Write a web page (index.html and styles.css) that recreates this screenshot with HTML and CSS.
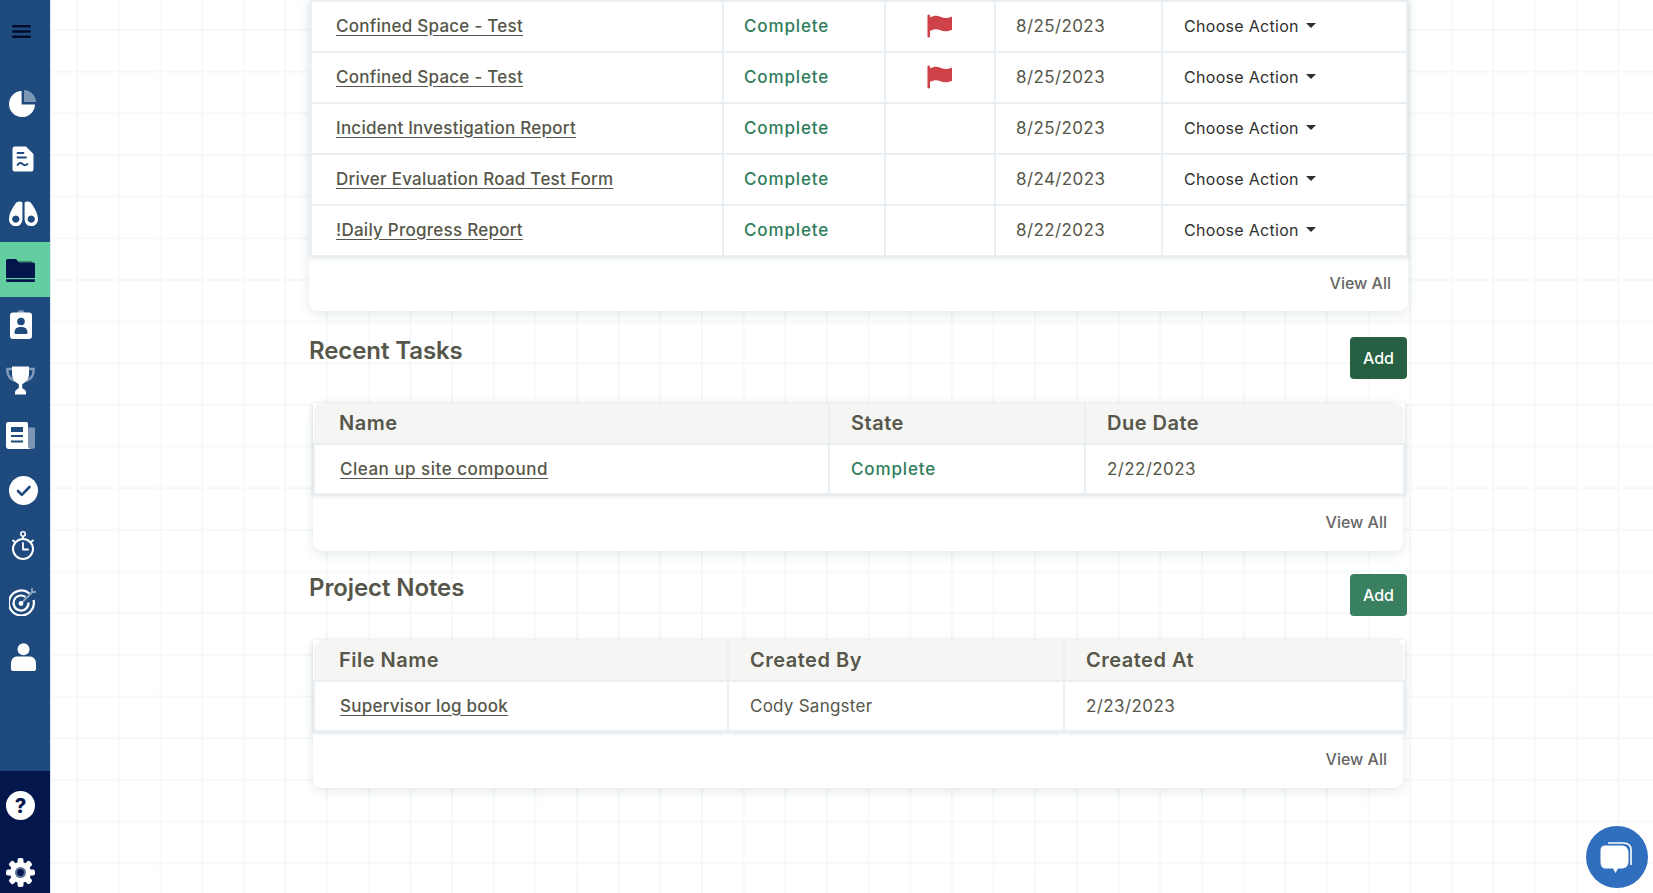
FILE: index.html
```html
<!DOCTYPE html>
<html lang="en">
<head>
<meta charset="utf-8">
<title>Project</title>
<link rel="stylesheet" href="styles.css">
</head>
<body>
<aside class="sidebar">
  <div class="side-top">
    <svg class="burger" width="19" height="13" viewBox="0 0 19 13"><rect width="19" height="2.400" rx="1.200"/><rect y="5.300" width="19" height="2.400" rx="1.200"/><rect y="10.600" width="19" height="2.400" rx="1.200"/></svg>
  </div>
  <nav class="side-nav">
    <a class="nav-item shift-r"><svg width="28" height="28" viewBox="0 0 28 28"><path fill="#fff" d="M12.600 2 A13 13 0 1 0 26 15.400 H12.600 Z"/><path fill="#fff" opacity=".42" d="M15 1 A12.600 12.600 0 0 1 27 13 H15 Z"/></svg></a>
    <a class="nav-item shift-r"><svg width="22" height="26" viewBox="0 0 22 26"><path fill="#fff" d="M3 .5 H14 L21.500 8 V23 a2.500 2.500 0 0 1 -2.500 2.500 H3 A2.500 2.500 0 0 1 .5 23 V3 A2.500 2.500 0 0 1 3 .5 Z"/><path fill="none" stroke="#1e4a7e" stroke-width="1.800" stroke-linecap="round" d="M5.500 7 H11.500 M5.500 11.500 H14 M5.500 19 C7 16.500 9 16.500 10.500 18 S13.500 19.800 15.500 18"/></svg></a>
    <a class="nav-item shift-r"><svg width="29" height="25" viewBox="0 0 29 25"><path fill="#fff" fill-rule="evenodd" d="M7 2 C8.500 .2 12 0 13.400 1.500 V18 A6.700 6.700 0 1 1 .1 17.500 C.2 12 4 6 7 2 Z M6.800 14.500 a3.600 3.600 0 1 0 .01 0 Z"/><path fill="#fff" fill-rule="evenodd" d="M22 2 C20.500 .2 17 0 15.600 1.500 V18 A6.700 6.700 0 1 0 28.900 17.500 C28.800 12 25 6 22 2 Z M22.200 14.500 a3.600 3.600 0 1 1 -.01 0 Z"/></svg></a>
    <a class="nav-item active"><svg width="29" height="23" viewBox="0 0 29 23"><path fill="#3f8a72" d="M10 2 H26 V8 H10 Z"/><path fill="#04174c" d="M1.500 0 H10 L13 3.500 H27.500 A1.500 1.500 0 0 1 29 5 V19 H0 V1.500 A1.500 1.500 0 0 1 1.500 0 Z"/><path fill="#04174c" d="M0 20.300 H29 V21.500 A1.500 1.500 0 0 1 27.500 23 H1.500 A1.500 1.500 0 0 1 0 21.500 Z"/></svg></a>
    <a class="nav-item shift-l"><svg width="22" height="29" viewBox="0 0 22 29"><path fill="#fff" opacity=".4" d="M7 4 a4 4 0 0 1 8 0 Z"/><rect y="2.500" width="22" height="26.500" rx="3" fill="#fff"/><circle cx="11" cy="11.500" r="3.800" fill="#1e4a7e"/><path fill="#1e4a7e" d="M4.500 23 C4.500 18.500 7 17 11 17 S17.500 18.500 17.500 23 Q17.500 24 16 24 H6 Q4.500 24 4.500 23 Z"/></svg></a>
    <a class="nav-item shift-l"><svg width="29" height="29" viewBox="0 0 29 29"><path fill="none" stroke="#fff" stroke-opacity=".45" stroke-width="2.400" d="M7 3 H1.400 C1 9 3.500 13 9 15 M22 3 H27.600 C28 9 25.500 13 20 15"/><path fill="#fff" d="M6 .5 H23 V8 C23 14 19 16.500 16.200 18 V22 C17.500 23.500 20 24 20 26 V28.500 H9 V26 C9 24 11.500 23.500 12.800 22 V18 C10 16.500 6 14 6 8 Z"/></svg></a>
    <a class="nav-item shift-l"><svg width="29" height="27" viewBox="0 0 29 27"><path fill="#fff" opacity=".42" d="M22 5.500 H29 V24 A3 3 0 0 1 26 27 H20 Z"/><path fill="#fff" d="M2 0 H20.500 A1.500 1.500 0 0 1 22 1.500 V23.500 A3 3 0 0 0 25 27 H3 A3 3 0 0 1 0 24 V2 A2 2 0 0 1 2 0 Z"/><path fill="#1e4a7e" d="M5 5 H17 V10 H5 Z M5 13 H17 V15 H5 Z M5 18.500 H17 V20.500 H5 Z"/></svg></a>
    <a class="nav-item shift-r"><svg width="29" height="29" viewBox="0 0 29 29"><circle cx="14.500" cy="14.500" r="14.500" fill="#fff"/><path fill="none" stroke="#1e4a7e" stroke-width="2.600" stroke-linecap="round" stroke-linejoin="round" d="M9 15 L12.800 18.800 L20.500 11"/></svg></a>
    <a class="nav-item shift-r"><svg width="24" height="30" viewBox="0 0 24 30"><circle cx="12" cy="18" r="10" fill="none" stroke="#fff" stroke-width="2"/><circle cx="12" cy="3" r="2.200" fill="none" stroke="#fff" stroke-width="1.600"/><path fill="none" stroke="#fff" stroke-width="2" d="M12 5 V8 M1.500 9 L4.500 11.500 M22.500 9 L19.500 11.500"/><path fill="none" stroke="#fff" stroke-width="1.800" stroke-linecap="round" stroke-linejoin="round" d="M12 12 V18.500 H17"/></svg></a>
    <a class="nav-item shift-r"><svg width="28" height="29" viewBox="0 0 28 29"><path fill="none" stroke="#fff" stroke-width="2.200" d="M20.500 6.500 A12.500 12.500 0 1 0 24.500 13"/><path fill="none" stroke="#fff" stroke-width="2.200" d="M16.500 10 A7.500 7.500 0 1 0 19.500 15.500"/><circle cx="12" cy="16.500" r="2.400" fill="#fff"/><path fill="none" stroke="#fff" stroke-opacity=".5" stroke-width="1.800" d="M12 16.500 L24 4.500 M23 1 V5 H27"/></svg></a>
    <a class="nav-item shift-r"><svg width="25" height="28" viewBox="0 0 25 28"><circle cx="12.500" cy="6.200" r="6" fill="#fff"/><path fill="#fff" d="M0 21 C0 15 3.500 13.500 7 13.500 H18 C21.500 13.500 25 15 25 21 V26 A2 2 0 0 1 23 28 H2 A2 2 0 0 1 0 26 Z"/></svg></a>
  </nav>
  <div class="side-bottom">
    <a class="bottom-item"><svg width="29" height="29" viewBox="0 0 29 29"><circle cx="14.500" cy="14.500" r="14.500" fill="#fff"/><text x="14.500" y="21.500" text-anchor="middle" class="help-mark">?</text></svg></a>
    <a class="bottom-item"><svg width="29" height="29" viewBox="-14.500 -14.500 29 29"><g fill="#fff"><circle r="10.500"/><rect x="-3" y="-14.500" width="6" height="29" rx="2"/><rect x="-3" y="-14.500" width="6" height="29" rx="2" transform="rotate(45)"/><rect x="-3" y="-14.500" width="6" height="29" rx="2" transform="rotate(90)"/><rect x="-3" y="-14.500" width="6" height="29" rx="2" transform="rotate(135)"/></g><circle r="5.500" fill="#5f7098"/><circle r="3.400" fill="#04174c"/></svg></a>
  </div>
</aside>

<main class="content">
  <section class="card">
    <table class="grid-table">
      <colgroup><col class="c-412"><col class="c-162"><col class="c-110"><col class="c-167"><col class="c-245"></colgroup>
      <tbody>
        <tr><td><a class="doc-link">Confined Space - Test</a></td><td class="state">Complete</td><td class="flag-cell"><svg width="25" height="24" viewBox="0 0 26 24"><rect x=".5" y="0" width="2.600" height="24" rx="1.300" fill="#cf4149"/><path fill="#cf4149" d="M3 3 C8 .5 11 1 14 2.500 S21 4 26 2 V16 C21 18 17.500 18 14 16.500 S8 14.500 3 17 Z"/></svg></td><td class="date">8/25/2023</td><td><button class="action">Choose Action<span class="caret"></span></button></td></tr>
        <tr><td><a class="doc-link">Confined Space - Test</a></td><td class="state">Complete</td><td class="flag-cell"><svg width="25" height="24" viewBox="0 0 26 24"><rect x=".5" y="0" width="2.600" height="24" rx="1.300" fill="#cf4149"/><path fill="#cf4149" d="M3 3 C8 .5 11 1 14 2.500 S21 4 26 2 V16 C21 18 17.500 18 14 16.500 S8 14.500 3 17 Z"/></svg></td><td class="date">8/25/2023</td><td><button class="action">Choose Action<span class="caret"></span></button></td></tr>
        <tr><td><a class="doc-link">Incident Investigation Report</a></td><td class="state">Complete</td><td></td><td class="date">8/25/2023</td><td><button class="action">Choose Action<span class="caret"></span></button></td></tr>
        <tr><td><a class="doc-link">Driver Evaluation Road Test Form</a></td><td class="state">Complete</td><td></td><td class="date">8/24/2023</td><td><button class="action">Choose Action<span class="caret"></span></button></td></tr>
        <tr><td><a class="doc-link">!Daily Progress Report</a></td><td class="state">Complete</td><td></td><td class="date">8/22/2023</td><td><button class="action">Choose Action<span class="caret"></span></button></td></tr>
      </tbody>
    </table>
    <div class="card-foot"><a class="view-all">View All</a></div>
  </section>

  <div class="section-head first">
    <h2>Recent Tasks</h2>
    <button class="add dark">Add</button>
  </div>
  <section class="card inset">
    <table class="grid-table headed">
      <colgroup><col class="c-515"><col class="c-256"><col class="c-319"></colgroup>
      <thead><tr><th>Name</th><th>State</th><th>Due Date</th></tr></thead>
      <tbody><tr><td><a class="doc-link wide">Clean up site compound</a></td><td class="state">Complete</td><td class="date">2/22/2023</td></tr></tbody>
    </table>
    <div class="card-foot"><a class="view-all">View All</a></div>
  </section>

  <div class="section-head">
    <h2>Project Notes</h2>
    <button class="add">Add</button>
  </div>
  <section class="card inset">
    <table class="grid-table headed">
      <colgroup><col class="c-414"><col class="c-336"><col class="c-340"></colgroup>
      <thead><tr><th>File Name</th><th>Created By</th><th>Created At</th></tr></thead>
      <tbody><tr><td><a class="doc-link">Supervisor log book</a></td><td>Cody Sangster</td><td class="date">2/23/2023</td></tr></tbody>
    </table>
    <div class="card-foot"><a class="view-all">View All</a></div>
  </section>
</main>

<a class="chat"><svg width="36" height="34" viewBox="0 0 36 34"><path fill="none" stroke="#fff" stroke-width="1.600" d="M9 1 H24 C29 1 32 3 32 8 V23"/><path fill="#fff" d="M7 3.500 H22 C27 3.500 29.500 6 29.500 11 V19 C29.500 24 27 26.500 22 26.500 H19 L16.500 31 L14 26.500 H7 C3 26.500 1.500 24 1.500 19 V9 C1.500 5 3 3.500 7 3.500 Z"/></svg></a>
</body>
</html>
```

FILE: styles.css
```css
* { box-sizing: border-box; }

html, body { height: 100%; }

body {
  margin: 0;
  display: flex;
  height: 893px;
  overflow: hidden;
  color: #56574a;
  font-family: Inter, "Noto Sans", sans-serif;
  background-color: #fff;
  background-image:
    linear-gradient(to right, #f6f8f9 2px, transparent 2px),
    linear-gradient(to bottom, #f6f8f9 2px, transparent 2px);
  background-size: 41.67px 41.67px;
  background-position: 34.500px 29px;
}

.sidebar {
  flex: 0 0 51px;
  display: flex;
  flex-direction: column;
  background: #1e4a7e;
  border-right: 1px solid #dfe7ee;
}

.side-top {
  height: 75.500px;
  padding: 25px 0 0 12px;
}

.burger { display: block; fill: #020d2e; }

.side-nav { flex: 1; }

.nav-item {
  height: 55.400px;
  display: flex;
  align-items: center;
  justify-content: center;
}

.shift-r { padding-right: 4px; }
.shift-l { padding-right: 9px; }

.nav-item.active {
  padding: 2px 10px 0 0;
  background: #63cfa0;
}

.side-bottom {
  height: 122px;
  background: #04174c;
}

.bottom-item {
  display: flex;
  justify-content: center;
  padding-right: 10px;
  height: 67px;
  padding-top: 20px;
}

.help-mark {
  font: 800 20px Inter, sans-serif;
  fill: #04174c;
}

.content {
  flex: 1;
  padding-left: 258px;
}

.card,
.section-head { width: 1099px; }

.card {
  background: #fff;
  border-radius: 0 0 9px 9px;
  box-shadow: 0 3px 12px rgba(90, 120, 130, .16);
  padding: 0 1px;
}

.card.inset {
  width: 1090px;
  margin-left: 4px;
  border-radius: 9px;
  padding: 0;
}

.grid-table {
  width: 1096px;
  border-collapse: collapse;
  table-layout: fixed;
  background: #fff;
  font-size: 17px;
  letter-spacing: .25px;
  box-shadow: 0 1px 4px rgba(90, 120, 130, .22);
}

.headed { width: 100%; }

.c-412 { width: 412px; }
.c-162 { width: 162px; }
.c-110 { width: 110px; }
.c-167 { width: 167px; }
.c-245 { width: 245px; }
.c-515 { width: 515px; }
.c-256 { width: 256px; }
.c-319 { width: 319px; }
.c-414 { width: 414px; }
.c-336 { width: 336px; }
.c-340 { width: 340px; }

.grid-table td {
  height: 51px;
  padding: 0 20px 2px;
  border: 2px solid #e9eff2;
  white-space: nowrap;
}

.grid-table td:first-child { padding-left: 24px; }

.headed td {
  height: 50px;
  padding-left: 21px;
  padding-bottom: 0;
}

.headed td:first-child { padding-left: 25px; }

.headed th {
  height: 41px;
  padding: 0 21px 1px;
  text-align: left;
  font-size: 20px;
  font-weight: 600;
  letter-spacing: .5px;
  background: #f5f5f3;
  border-right: 2px solid #e9eff2;
  border-bottom: 2px solid #e9eff2;
}

.headed th:first-child { padding-left: 25px; border-top-left-radius: 9px; }
.headed th:last-child { border-right: 0; border-top-right-radius: 9px; }

.doc-link {
  font-weight: 500;
  color: #56574a;
  text-decoration: underline;
  text-underline-offset: 3px;
}

.doc-link.wide { letter-spacing: .5px; }

.state {
  color: #2f7d5c;
  font-weight: 500;
  letter-spacing: .85px;
}

.date { letter-spacing: .4px; }

.flag-cell { line-height: 0; padding-left: 41px !important; }

.action {
  margin-left: 1px;
  padding: 0;
  border: 0;
  background: none;
  display: inline-flex;
  align-items: center;
  gap: 7px;
  font: 400 16px Inter, sans-serif;
  letter-spacing: .3px;
  color: #2f2f2f;
}

.caret {
  width: 0;
  height: 0;
  border-left: 5px solid transparent;
  border-right: 5px solid transparent;
  border-top: 5px solid #2f2f2f;
}

.card-foot {
  height: 54px;
  padding: 0 16px 2px 0;
  display: flex;
  justify-content: flex-end;
  align-items: center;
}

.view-all {
  color: #666;
  font-size: 16px;
  font-weight: 500;
}

.inset .card-foot { height: 56px; }

.section-head {
  display: flex;
  justify-content: space-between;
  align-items: flex-start;
  margin-top: 22.500px;
  margin-bottom: 24.500px;
}

.section-head.first { margin-top: 26px; margin-bottom: 24px; }

.section-head h2 {
  margin: 0;
  font-size: 24px;
  line-height: 28px;
  font-weight: 600;
  letter-spacing: -.1px;
  color: #56574a;
}

.add {
  width: 57px;
  height: 42px;
  margin-right: 1px;
  padding: 0;
  border: 0;
  border-radius: 4px;
  background: #398061;
  color: #fff;
  font: 500 16px Inter, sans-serif;
}

.add.dark { background: #265f41; }

.chat {
  position: fixed;
  right: 5px;
  bottom: 5px;
  width: 62px;
  height: 62px;
  padding-top: 3px;
  border-radius: 50%;
  background: #2f6fbd;
  display: flex;
  align-items: center;
  justify-content: center;
}
```
